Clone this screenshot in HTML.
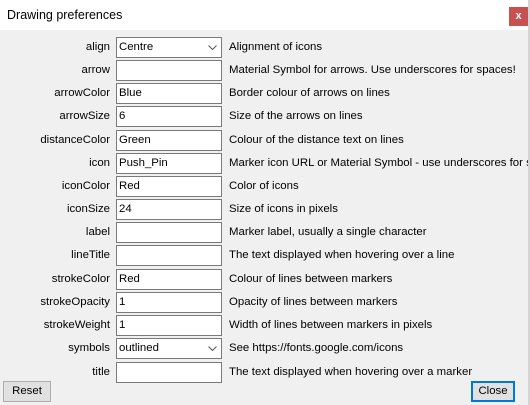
<!DOCTYPE html>
<html><head><style>
body{margin:0;width:530px;height:405px;overflow:hidden;font-family:"Liberation Sans",sans-serif;font-size:11.4px;color:#000;background:#f0f0f0;position:relative}
.tb{position:absolute;left:0;top:0;width:528px;height:30px;background:#fff}
.tt{position:absolute;left:7px;top:8px;font-size:12.5px}
.x{position:absolute;left:509px;top:7px;width:19px;height:19px;background:#c75050;color:#fff;font-weight:bold;text-align:center;line-height:18px;font-size:11px}
.edge{position:absolute;left:528px;top:0;width:2px;height:405px;background:#d4d4d4}
.r{position:absolute;left:0;height:21px;width:528px;overflow:hidden}
.l{position:absolute;right:418px;top:4px;white-space:nowrap}
.i{position:absolute;left:116px;top:0;width:104px;height:19px;border:1px solid #7a7a7a;background:#fff}
.i span{position:absolute;left:2px;top:3px}
.i svg{position:absolute;right:4px;top:7px}
.d{position:absolute;left:229px;top:4px;white-space:nowrap}
.b{position:absolute;top:381px;height:19px;border:1px solid #adadad;background:#e1e1e1;text-align:center;line-height:19px}
</style></head><body>
<div class="tb"><div class="tt">Drawing preferences</div><div class="x">x</div></div>
<div class="edge"></div>
<div class="r" style="top:37px"><div class="l">align</div><div class="i"><span>Centre</span><svg width="9" height="5"><path d="M0.5 0.5L4.5 4.5L8.5 0.5" fill="none" stroke="#555"/></svg></div><div class="d">Alignment of icons</div></div>
<div class="r" style="top:60px"><div class="l">arrow</div><div class="i"></div><div class="d">Material Symbol for arrows. Use underscores for spaces!</div></div>
<div class="r" style="top:83px"><div class="l">arrowColor</div><div class="i"><span>Blue</span></div><div class="d">Border colour of arrows on lines</div></div>
<div class="r" style="top:106px"><div class="l">arrowSize</div><div class="i"><span>6</span></div><div class="d">Size of the arrows on lines</div></div>
<div class="r" style="top:130px"><div class="l">distanceColor</div><div class="i"><span>Green</span></div><div class="d">Colour of the distance text on lines</div></div>
<div class="r" style="top:153px"><div class="l">icon</div><div class="i"><span>Push_Pin</span></div><div class="d">Marker icon URL or Material Symbol - use underscores for spaces</div></div>
<div class="r" style="top:176px"><div class="l">iconColor</div><div class="i"><span>Red</span></div><div class="d">Color of icons</div></div>
<div class="r" style="top:199px"><div class="l">iconSize</div><div class="i"><span>24</span></div><div class="d">Size of icons in pixels</div></div>
<div class="r" style="top:222px"><div class="l">label</div><div class="i"></div><div class="d">Marker label, usually a single character</div></div>
<div class="r" style="top:245px"><div class="l">lineTitle</div><div class="i"></div><div class="d">The text displayed when hovering over a line</div></div>
<div class="r" style="top:269px"><div class="l">strokeColor</div><div class="i"><span>Red</span></div><div class="d">Colour of lines between markers</div></div>
<div class="r" style="top:292px"><div class="l">strokeOpacity</div><div class="i"><span>1</span></div><div class="d">Opacity of lines between markers</div></div>
<div class="r" style="top:315px"><div class="l">strokeWeight</div><div class="i"><span>1</span></div><div class="d">Width of lines between markers in pixels</div></div>
<div class="r" style="top:338px"><div class="l">symbols</div><div class="i"><span>outlined</span><svg width="9" height="5"><path d="M0.5 0.5L4.5 4.5L8.5 0.5" fill="none" stroke="#555"/></svg></div><div class="d">See https://fonts.google.com/icons</div></div>
<div class="r" style="top:362px"><div class="l">title</div><div class="i"></div><div class="d">The text displayed when hovering over a marker</div></div>
<div class="b" style="left:3px;width:46px">Reset</div>
<div class="b" style="left:471px;width:40px;border:2px solid #0078d7;height:17px;line-height:17px">Close</div>
</body></html>
